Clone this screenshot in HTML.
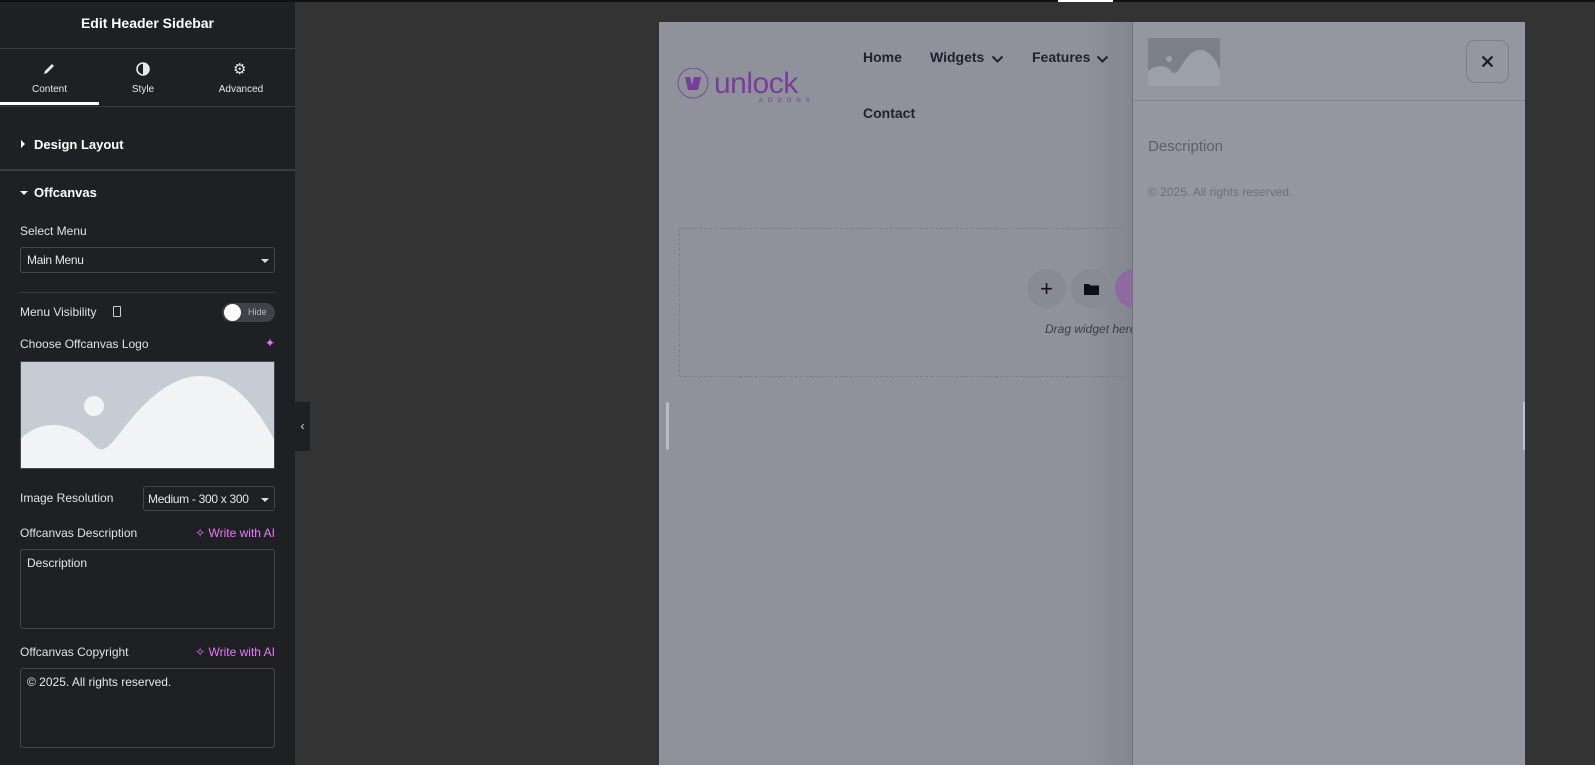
<!DOCTYPE html>
<html><head><meta charset="utf-8"><style>
*{box-sizing:border-box;margin:0;padding:0}
body{width:1595px;height:765px;overflow:hidden;background:#333;font-family:"Liberation Sans",sans-serif;position:relative}
.abs{position:absolute}
#side{left:0;top:0;width:295px;height:765px;background:#1f2024;color:#e6e7ea;font-size:12px}
.lbl{position:absolute;left:20px;font-size:12px;color:#e0e1e4}
.hr{position:absolute;left:0;width:295px;height:1px;background:#3a3b40}
.sel{position:absolute;border:1px solid #45474d;border-radius:3px;background:#1f2024;font-size:12px;color:#e6e7ea;padding-left:4px;line-height:24px;letter-spacing:-0.3px}
.caret{position:absolute;right:5px;top:11px;border-left:4px solid transparent;border-right:4px solid transparent;border-top:4px solid #ddd}
.ta{position:absolute;left:20px;width:255px;height:80px;border:1px solid #45474d;border-radius:3px;font-size:12px;color:#e6e7ea;padding:6px}
.ai{position:absolute;right:20px;font-size:12px;color:#e879f9}
</style></head><body>
<div class="abs" style="left:0;top:0;width:1595px;height:2px;background:#111"></div>
<div class="abs" style="left:1058px;top:0;width:55px;height:2px;background:#fff"></div>

<div id="side" class="abs">
 <div class="abs" style="left:0;top:0;width:295px;height:2px;background:#111"></div>
 <div class="abs" style="left:0;top:15px;width:295px;text-align:center;font-weight:bold;font-size:14px;color:#fff">Edit Header Sidebar</div>
 <div class="hr" style="top:48px"></div>
 <svg class="abs" style="left:42px;top:62px" width="14" height="14" viewBox="0 0 14 14"><path d="M2 12l1-3 7-7 2 2-7 7z" fill="#e6e7ea"/></svg>
 <div class="abs" style="left:0;top:84px;width:99px;text-align:center;font-size:10px">Content</div>
 <div class="abs" style="left:0;top:102px;width:99px;height:3px;background:#fff"></div>
 <svg class="abs" style="left:136px;top:62px" width="14" height="14" viewBox="0 0 14 14"><circle cx="7" cy="7" r="6" fill="none" stroke="#e6e7ea" stroke-width="1.6"/><path d="M7 1a6 6 0 0 1 0 12z" fill="#e6e7ea"/></svg>
 <div class="abs" style="left:99px;top:84px;width:88px;text-align:center;font-size:10px">Style</div>
 <div class="abs" style="left:233px;top:60px;font-size:15px;color:#e6e7ea">⚙</div>
 <div class="abs" style="left:190px;top:84px;width:102px;text-align:center;font-size:10px">Advanced</div>
 <div class="hr" style="top:106px"></div>
 <div class="abs" style="left:21px;top:140px;border-top:4px solid transparent;border-bottom:4px solid transparent;border-left:4px solid #fff"></div>
 <div class="abs" style="left:34px;top:137px;font-weight:bold;font-size:13px;color:#fff">Design Layout</div>
 <div class="hr" style="top:169px;height:2px"></div>
 <div class="abs" style="left:20px;top:191px;border-left:4px solid transparent;border-right:4px solid transparent;border-top:4px solid #fff"></div>
 <div class="abs" style="left:34px;top:185px;font-weight:bold;font-size:13px;color:#fff">Offcanvas</div>
 <div class="lbl" style="top:224px">Select Menu</div>
 <div class="sel" style="left:20px;top:247px;width:255px;height:26px;padding-left:6px">Main Menu<div class="caret"></div></div>
 <div class="hr" style="left:20px;width:255px;top:292px"></div>
 <div class="lbl" style="top:305px">Menu Visibility</div>
 <div class="abs" style="left:113px;top:306px;width:8px;height:11px;border:1.5px solid #ccc;border-radius:1px"></div>
 <div class="abs" style="left:222px;top:303px;width:53px;height:19px;border-radius:10px;background:#3f4249"></div>
 <div class="abs" style="left:224px;top:304px;width:17px;height:17px;border-radius:50%;background:#fff"></div>
 <div class="abs" style="left:248px;top:307px;font-size:9px;color:#b8bac0">Hide</div>
 <div class="lbl" style="top:337px">Choose Offcanvas Logo</div>
 <div class="ai" style="top:336px">✦</div>
 <svg class="abs" style="left:20px;top:361px" width="255" height="108" viewBox="0 0 255 108"><rect width="255" height="108" fill="#c5ccd3"/><circle cx="74" cy="45" r="10" fill="#f1f3f5"/><path d="M0 78 C25 55 55 62 75 85 C90 100 100 60 140 30 C175 5 215 5 255 80 V108 H0Z" fill="#f1f3f5"/><rect x=".5" y=".5" width="254" height="107" fill="none" stroke="#45474d"/></svg>
 <div class="lbl" style="top:491px">Image Resolution</div>
 <div class="sel" style="left:143px;top:486px;width:132px;height:25px">Medium - 300 x 300<div class="caret"></div></div>
 <div class="lbl" style="top:526px">Offcanvas Description</div>
 <div class="ai" style="top:526px">✧ Write with AI</div>
 <div class="ta" style="top:549px">Description</div>
 <div class="lbl" style="top:645px">Offcanvas Copyright</div>
 <div class="ai" style="top:645px">✧ Write with AI</div>
 <div class="ta" style="top:668px">© 2025. All rights reserved.</div>
</div>
<div class="abs" style="left:295px;top:402px;width:15px;height:49px;background:#1f2024;color:#ddd;font-size:12px;line-height:49px;text-align:center">‹</div>

<!-- preview page -->
<div class="abs" style="left:659px;top:22px;width:866px;height:743px;background:#8f929b"></div>
<div class="abs" style="left:1085px;top:22px;width:47px;height:743px;background:linear-gradient(90deg,rgba(0,0,0,0),rgba(40,44,60,.12))"></div>
<div class="abs" style="left:666px;top:402px;width:3px;height:48px;background:#b9bcc3;border-radius:2px"></div>
<svg class="abs" style="left:677px;top:68px" width="146" height="36" viewBox="0 0 146 36"><circle cx="16" cy="15" r="15" fill="none" stroke="#7a4a9e" stroke-width="1"/><path d="M8 9 L13 9 L15 17 L17 9 L24 9 L21 22 L11 22Z" fill="#7a3d9a"/><text x="37" y="25" font-family="Liberation Sans,sans-serif" font-size="30" fill="#7a3d9a" letter-spacing="-0.5">unlock</text><text x="82" y="34" font-family="Liberation Sans,sans-serif" font-size="6" fill="#7a3d9a" letter-spacing="5">ADDONS</text></svg>
<div class="abs" style="left:863px;top:49px;font-weight:bold;font-size:14px;color:#1e2230">Home</div>
<div class="abs" style="left:930px;top:49px;font-weight:bold;font-size:14px;color:#1e2230">Widgets</div>
<svg class="abs" style="left:991px;top:55px" width="13" height="9" viewBox="0 0 13 9"><path d="M1.5 1.5l5 5 5-5" fill="none" stroke="#1e2230" stroke-width="2"/></svg>
<div class="abs" style="left:1032px;top:49px;font-weight:bold;font-size:14px;color:#1e2230">Features</div>
<svg class="abs" style="left:1096px;top:55px" width="13" height="9" viewBox="0 0 13 9"><path d="M1.5 1.5l5 5 5-5" fill="none" stroke="#1e2230" stroke-width="2"/></svg>
<div class="abs" style="left:863px;top:105px;font-weight:bold;font-size:14px;color:#1e2230">Contact</div>
<div class="abs" style="left:679px;top:228px;width:470px;height:149px;border:1.5px dashed #7d8089"></div>
<div class="abs" style="left:1027px;top:269px;width:39px;height:39px;border-radius:50%;background:#888b94;text-align:center;line-height:39px;font-size:22px;color:#111">+</div>
<div class="abs" style="left:1071px;top:269px;width:39px;height:39px;border-radius:50%;background:#888b94"></div>
<svg class="abs" style="left:1084px;top:283px" width="15" height="12" viewBox="0 0 15 12"><path d="M0 1h5l1.5 1.5H15V12H0z" fill="#0b0f1a"/></svg>
<div class="abs" style="left:1115px;top:269px;width:39px;height:39px;border-radius:50%;background:#8e6aa0"></div>
<div class="abs" style="left:1045px;top:322px;font-style:italic;font-size:12px;color:#3a3e4a">Drag widget here</div>

<!-- offcanvas panel -->
<div class="abs" style="left:1132px;top:22px;width:393px;height:743px;background:#9497a0;border-left:1px solid #6e717b"></div>
<svg class="abs" style="left:1148px;top:38px" width="72" height="48" viewBox="0 0 72 48"><rect width="72" height="48" fill="#7b808b"/><circle cx="21" cy="21" r="3" fill="#9ba0a9"/><path d="M0 33 C10 25 20 28 24 34 C30 40 35 20 45 14 C55 8 66 16 72 32 V48 H0Z" fill="#9ba0a9"/></svg>
<div class="abs" style="left:1466px;top:40px;width:43px;height:43px;border:1px solid #7d808b;border-radius:9px"></div>
<svg class="abs" style="left:1481px;top:55px" width="13" height="13" viewBox="0 0 13 13"><path d="M1.5 1.5l10 10M11.5 1.5l-10 10" stroke="#1a1d28" stroke-width="2.2"/></svg>
<div class="abs" style="left:1133px;top:100px;width:392px;height:1px;background:#80838d"></div>
<div class="abs" style="left:1148px;top:138px;font-size:15px;color:#5d606b">Description</div>
<div class="abs" style="left:1148px;top:185px;font-size:12px;color:#6d707a">© 2025. All rights reserved.</div>
<div class="abs" style="left:1523px;top:402px;width:2px;height:48px;background:#c0c3ca"></div>
</body></html>
